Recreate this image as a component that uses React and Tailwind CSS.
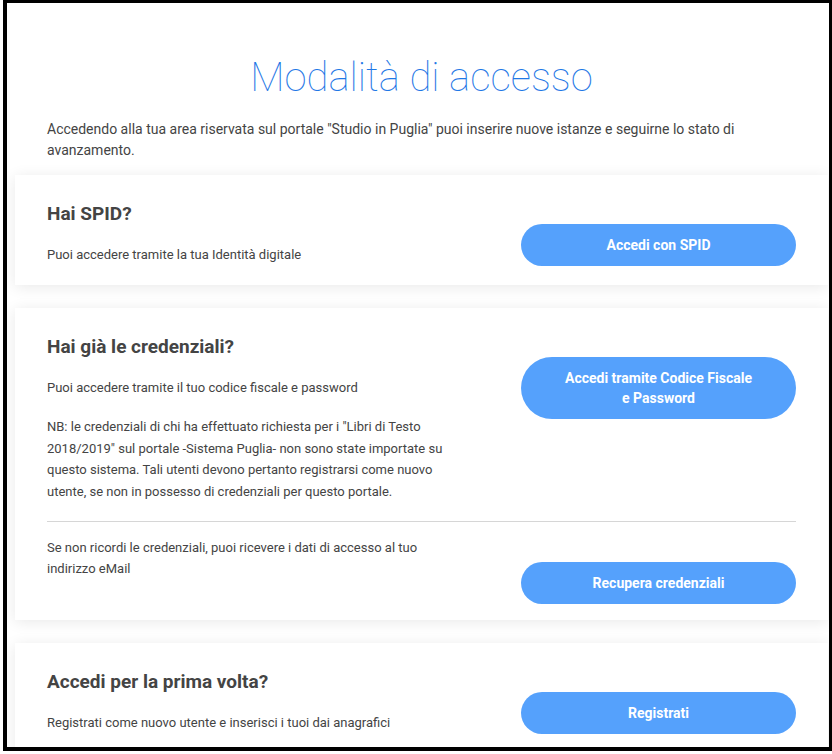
const Button = ({ children, className = "" }) => (
  <button
    className={`w-[275px] rounded-full bg-[#55a1fc] text-white text-[14px] font-bold leading-[20px] ${className}`}
  >
    {children}
  </button>
);

const Card = ({ children, className = "" }) => (
  <div className={`w-[813px] bg-white shadow-[0_2px_14px_rgba(0,0,0,0.09)] px-[32px] ${className}`}>
    {children}
  </div>
);

export default function App() {
  return (
    <div
      className="w-[832px] h-[754px] bg-white overflow-hidden"
      style={{ fontFamily: "Roboto, 'Liberation Sans', sans-serif" }}
    >
      <div className="ml-[3px] w-[830px] h-[751px] border-black border-x-[4px] border-t-[3px] border-b-[4px] overflow-hidden">
        <div className="pl-[8px] w-[821px]">
          {/* Header */}
          <h1 className="mt-[51px] text-center text-[40px] leading-[48px] font-thin text-[#1f78e6]">
            Modalità di accesso
          </h1>
          <p className="mt-[17px] px-[32px] text-[14px] leading-[21px] text-[#444]">
            Accedendo alla tua area riservata sul portale "Studio in Puglia" puoi inserire nuove istanze e seguirne lo stato di avanzamento.
          </p>

          {/* SPID */}
          <Card className="mt-[14px] flex">
            <div className="w-[415px] pt-[25px] pb-[19px]">
              <h3 className="text-[19px] leading-[28px] font-bold text-[#444]">Hai SPID?</h3>
              <p className="mt-[16px] text-[13px] leading-[21.6px] text-[#444]">
                Puoi accedere tramite la tua Identità digitale
              </p>
            </div>
            <div className="ml-auto pt-[49px]">
              <Button className="h-[42px]">Accedi con SPID</Button>
            </div>
          </Card>

          {/* Credenziali */}
          <Card className="mt-[23px]">
            <div className="flex">
              <div className="w-[415px] pt-[25px]">
                <h3 className="text-[19px] leading-[28px] font-bold text-[#444]">Hai già le credenziali?</h3>
                <p className="mt-[16px] text-[13px] leading-[21.6px] text-[#444]">
                  Puoi accedere tramite il tuo codice fiscale e password
                </p>
                <p className="mt-[18px] text-[13px] leading-[21.6px] text-[#444]">
                  NB: le credenziali di chi ha effettuato richiesta per i "Libri di Testo 2018/2019" sul portale -Sistema Puglia- non sono state importate su questo sistema. Tali utenti devono pertanto registrarsi come nuovo utente, se non in possesso di credenziali per questo portale.
                </p>
              </div>
              <div className="ml-auto pt-[49px]">
                <Button className="py-[11px]">
                  Accedi tramite Codice Fiscale
                  <br />e Password
                </Button>
              </div>
            </div>
            <div className="mt-[18px] border-t border-[#d6d6d6]" />
            <div className="flex pb-[16px]">
              <div className="w-[415px] pt-[15px]">
                <p className="text-[13px] leading-[21.6px] text-[#444]">
                  Se non ricordi le credenziali, puoi ricevere i dati di accesso al tuo indirizzo eMail
                </p>
              </div>
              <div className="ml-auto pt-[40px]">
                <Button className="h-[42px]">Recupera credenziali</Button>
              </div>
            </div>
          </Card>

          {/* Registrazione */}
          <Card className="mt-[23px] flex">
            <div className="w-[415px] pt-[25px] pb-[19px]">
              <h3 className="text-[19px] leading-[28px] font-bold text-[#444]">Accedi per la prima volta?</h3>
              <p className="mt-[16px] text-[13px] leading-[21.6px] text-[#444]">
                Registrati come nuovo utente e inserisci i tuoi dai anagrafici
              </p>
            </div>
            <div className="ml-auto pt-[49px]">
              <Button className="h-[42px]">Registrati</Button>
            </div>
          </Card>
        </div>
      </div>
    </div>
  );
}
